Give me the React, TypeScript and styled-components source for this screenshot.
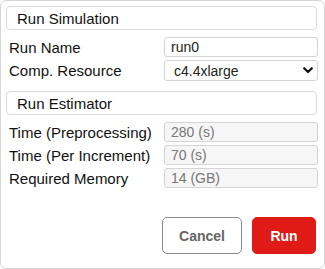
import React from "react";
import styled, { createGlobalStyle } from "styled-components";

const Global = createGlobalStyle`
  html, body { margin: 0; padding: 0; background: #fff; }
  * { box-sizing: border-box; }
  body { font-family: "Liberation Sans", Arial, sans-serif; }
`;

const Panel = styled.div`
  width: 325px;
  height: 269px;
  border: 1px solid #d6d6d6;
  border-radius: 6px;
  padding: 5px 7px 0 5px;
  display: flex;
  flex-direction: column;
  background: #fff;
`;

const SectionHeader = styled.div<{ $top?: number }>`
  height: 24px;
  margin-top: ${(p) => p.$top ?? 0}px;
  border: 1px solid #dcdcdc;
  border-radius: 4px;
  padding-left: 10px;
  display: flex;
  align-items: center;
  font-size: 15px;
  color: #111;
`;

const Rows = styled.div`
  margin-top: 7px;
  display: grid;
  grid-template-columns: 155px 154px;
  row-gap: 3px;
  padding-left: 3px;
`;

const Label = styled.label`
  font-size: 15px;
  color: #111;
  display: flex;
  align-items: center;
  white-space: nowrap;
`;

const Input = styled.input<{ $readOnlyLook?: boolean }>`
  height: ${(p) => (p.$readOnlyLook ? 20 : 20)}px;
  width: 100%;
  border: 1px solid #d4d4d4;
  border-radius: 3px;
  padding: 0 6px;
  font-family: "Liberation Sans", Arial, sans-serif;
  font-size: 14px;
  color: ${(p) => (p.$readOnlyLook ? "#777" : "#222")};
  background: ${(p) => (p.$readOnlyLook ? "#f6f6f6" : "#fff")};
  outline: none;
`;

const SelectWrap = styled.div`
  position: relative;
  height: 21px;
`;

const Select = styled.select`
  appearance: none;
  -webkit-appearance: none;
  width: 100%;
  height: 21px;
  border: 1px solid #d4d4d4;
  border-radius: 3px;
  padding: 0 0 0 9px;
  font-family: "Liberation Sans", Arial, sans-serif;
  font-size: 14px;
  color: #222;
  background: #fff;
  outline: none;
`;

const Chevron = styled.svg`
  position: absolute;
  right: 5px;
  top: 7px;
  pointer-events: none;
`;

const Footer = styled.div`
  margin-top: auto;
  margin-bottom: 14px;
  display: flex;
  justify-content: flex-end;
  gap: 10px;
  padding-right: 1px;
`;

const Button = styled.button<{ $primary?: boolean }>`
  height: 37px;
  width: ${(p) => (p.$primary ? 64 : 80)}px;
  border-radius: 5px;
  border: 1px solid ${(p) => (p.$primary ? "#e01b17" : "#8a8a8a")};
  background: ${(p) => (p.$primary ? "#e01b17" : "#fff")};
  color: ${(p) => (p.$primary ? "#fff" : "#666")};
  font-family: "Liberation Sans", Arial, sans-serif;
  font-weight: bold;
  font-size: 14px;
  cursor: pointer;
`;

export default function App() {
  return (
    <>
      <Global />
      <Panel>
        <SectionHeader>Run Simulation</SectionHeader>
        <Rows>
          <Label>Run Name</Label>
          <Input defaultValue="run0" />
          <Label>Comp. Resource</Label>
          <SelectWrap>
            <Select defaultValue="c4.4xlarge">
              <option>c4.4xlarge</option>
            </Select>
            <Chevron width="10" height="7" viewBox="0 0 10 7">
              <path d="M1.2 1.2 L5 5 L8.8 1.2" fill="none" stroke="#111" strokeWidth="2.2" strokeLinecap="round" strokeLinejoin="round" />
            </Chevron>
          </SelectWrap>
        </Rows>
        <SectionHeader $top={10}>Run Estimator</SectionHeader>
        <Rows>
          <Label>Time (Preprocessing)</Label>
          <Input $readOnlyLook readOnly value="280 (s)" />
          <Label>Time (Per Increment)</Label>
          <Input $readOnlyLook readOnly value="70 (s)" />
          <Label>Required Memory</Label>
          <Input $readOnlyLook readOnly value="14 (GB)" />
        </Rows>
        <Footer>
          <Button>Cancel</Button>
          <Button $primary>Run</Button>
        </Footer>
      </Panel>
    </>
  );
}
